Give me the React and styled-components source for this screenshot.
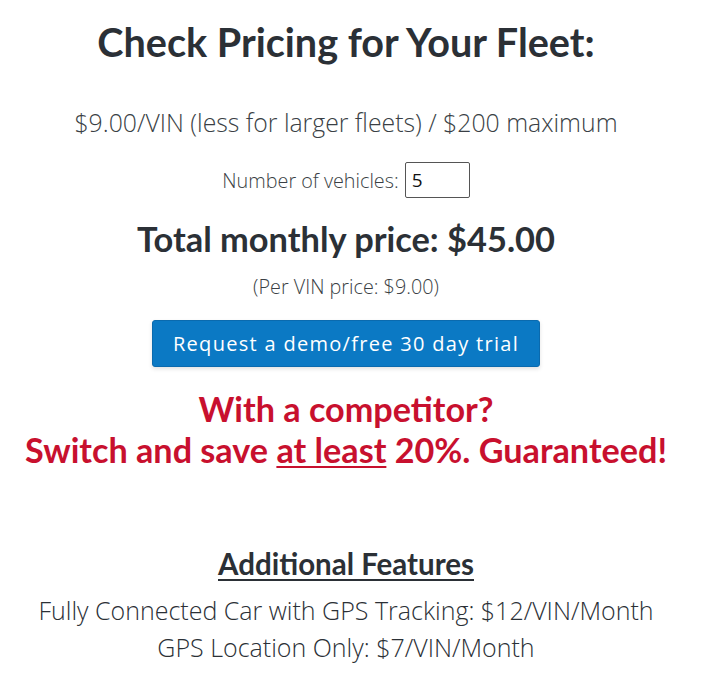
import styled, { createGlobalStyle } from 'styled-components';
import { useState } from 'react';

const GlobalStyle = createGlobalStyle`
  html, body {
    margin: 0;
    padding: 0;
    background: #fff;
  }
  body {
    font-family: 'Open Sans', 'Liberation Sans', sans-serif;
    color: #2b3036;
  }
`;

const App = () => {
  const [vehicles, setVehicles] = useState('5');
  const count = parseInt(vehicles, 10) || 0;
  const perVin = 9;
  const total = Math.min(count * perVin, 200);

  return (
    <>
      <GlobalStyle />
      <Page>
        <Title>Check Pricing for Your Fleet:</Title>
        <Rate>$9.00/VIN (less for larger fleets) / $200 maximum</Rate>
        <VehicleRow>
          <Label htmlFor='vehicles'>Number of vehicles:</Label>
          <CountInput
            id='vehicles'
            value={vehicles}
            onChange={(e) => setVehicles(e.target.value)}
          />
        </VehicleRow>
        <Total>Total monthly price: ${total.toFixed(2)}</Total>
        <PerVin>(Per VIN price: ${perVin.toFixed(2)})</PerVin>
        <DemoButton type='button'>Request a demo/free 30 day trial</DemoButton>
        <Promo>
          With a competitor?
          <br />
          Switch and save <u>at least</u> 20%. Guaranteed!
        </Promo>
        <FeaturesHeading>Additional Features</FeaturesHeading>
        <Feature>Fully Connected Car with GPS Tracking: $12/VIN/Month</Feature>
        <Feature>GPS Location Only: $7/VIN/Month</Feature>
      </Page>
    </>
  );
};

export default App;

const Page = styled.div`
  width: 692px;
  display: flex;
  flex-direction: column;
  align-items: center;
  text-align: center;
  padding-top: 18px;
`;

const Title = styled.h1`
  font-family: Lato, sans-serif;
  font-weight: 700;
  font-size: 39.6px;
  line-height: 1.2;
  margin: 0;
  color: #2b3036;
`;

const Rate = styled.p`
  font-weight: 300;
  font-size: 24.8px;
  line-height: 1.4;
  margin: 39px 0 0;
  color: #3a3f45;
`;

const VehicleRow = styled.div`
  display: flex;
  align-items: center;
  gap: 6px;
  margin-top: 23px;
`;

const Label = styled.label`
  font-weight: 300;
  font-size: 19.8px;
  color: #3a3f45;
`;

const CountInput = styled.input`
  width: 65px;
  height: 36px;
  box-sizing: border-box;
  border: 1px solid #555;
  border-radius: 2px;
  padding: 0 6px;
  font-family: 'Open Sans', sans-serif;
  font-size: 19px;
  color: #111;
  outline: none;
`;

const Total = styled.h2`
  font-family: Lato, sans-serif;
  font-weight: 700;
  font-size: 34.4px;
  line-height: 1.2;
  margin: 20px 0 0;
`;

const PerVin = styled.p`
  font-weight: 300;
  font-size: 19.8px;
  line-height: 1.4;
  margin: 14px 0 0;
  color: #3a3f45;
`;

const DemoButton = styled.button`
  margin-top: 19px;
  width: 388px;
  height: 47px;
  background: #0b79c4;
  border: 1px solid #0a6aae;
  border-radius: 3px;
  box-shadow: 0 2px 4px rgba(0, 0, 0, 0.12);
  color: #fff;
  font-family: 'Open Sans', sans-serif;
  font-size: 20px;
  letter-spacing: 1.3px;
  cursor: pointer;
`;

const Promo = styled.p`
  font-family: Lato, sans-serif;
  font-weight: 700;
  font-size: 34.2px;
  line-height: 41px;
  color: #c8102e;
  margin: 21px 0 0;

  u {
    text-decoration-thickness: 2px;
    text-underline-offset: 3px;
  }
`;

const FeaturesHeading = styled.h3`
  font-family: Lato, sans-serif;
  font-weight: 700;
  font-size: 29.5px;
  line-height: 1.2;
  margin: 76px 0 10px;
  text-decoration: underline;
  text-decoration-thickness: 2px;
  text-underline-offset: 4px;
`;

const Feature = styled.p`
  font-weight: 300;
  font-size: 25px;
  line-height: 1.48;
  margin: 0;
  color: #2b3036;
`;
